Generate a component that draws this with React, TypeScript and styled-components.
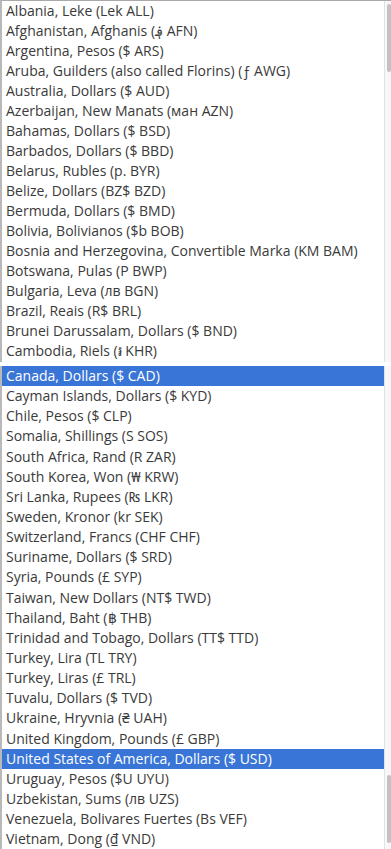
import React from 'react'
import styled, { createGlobalStyle } from 'styled-components'

type Currency = { label: string; selected?: boolean }

const GlobalStyle = createGlobalStyle`
  html, body {
    margin: 0;
    padding: 0;
    background: #ffffff;
  }
`

const Page = styled.div`
  width: 391px;
  height: 849px;
  overflow: hidden;
  display: flex;
  flex-direction: column;
  gap: 4px;
  background: #ffffff;
  font-family: 'Open Sans', 'Noto Sans', sans-serif;
`

const Panel = styled.div<{ $top?: boolean; $height: number }>`
  display: flex;
  height: ${(p) => p.$height}px;
  border-top: ${(p) => (p.$top ? '1px solid #a9a9a9' : 'none')};
  border-left: 2px solid #b9b9b9;
  flex-shrink: 0;
`

const Options = styled.ul`
  flex: 1;
  margin: 0;
  padding: 0;
  list-style: none;
  overflow: hidden;
`

const Option = styled.li<{ $selected?: boolean; $row: number }>`
  height: ${(p) => p.$row}px;
  line-height: ${(p) => p.$row}px;
  padding-left: 4px;
  font-size: 14px;
  white-space: nowrap;
  color: ${(p) => (p.$selected ? '#ffffff' : '#3a3a3a')};
  background: ${(p) => (p.$selected ? '#3875d7' : 'transparent')};
`

const Track = styled.div`
  width: 4px;
  border-left: 1px solid #e2e2e2;
  background: #f7f7f7;
  display: flex;
  flex-direction: column;
  padding: 0 0 0 2px;
`

const Thumb = styled.div<{ $offset: number; $length: number }>`
  margin-top: ${(p) => p.$offset}px;
  height: ${(p) => p.$length}px;
  width: 4px;
  border-radius: 2px;
  background: #c2c2c2;
`

const first: Currency[] = [
  { label: 'Albania, Leke (Lek ALL)' },
  { label: 'Afghanistan, Afghanis (؋ AFN)' },
  { label: 'Argentina, Pesos ($ ARS)' },
  { label: 'Aruba, Guilders (also called Florins) (ƒ AWG)' },
  { label: 'Australia, Dollars ($ AUD)' },
  { label: 'Azerbaijan, New Manats (ман AZN)' },
  { label: 'Bahamas, Dollars ($ BSD)' },
  { label: 'Barbados, Dollars ($ BBD)' },
  { label: 'Belarus, Rubles (p. BYR)' },
  { label: 'Belize, Dollars (BZ$ BZD)' },
  { label: 'Bermuda, Dollars ($ BMD)' },
  { label: 'Bolivia, Bolivianos ($b BOB)' },
  { label: 'Bosnia and Herzegovina, Convertible Marka (KM BAM)' },
  { label: 'Botswana, Pulas (P BWP)' },
  { label: 'Bulgaria, Leva (лв BGN)' },
  { label: 'Brazil, Reais (R$ BRL)' },
  { label: 'Brunei Darussalam, Dollars ($ BND)' },
  { label: 'Cambodia, Riels (៛ KHR)' },
]

const second: Currency[] = [
  { label: 'Canada, Dollars ($ CAD)', selected: true },
  { label: 'Cayman Islands, Dollars ($ KYD)' },
  { label: 'Chile, Pesos ($ CLP)' },
  { label: 'Somalia, Shillings (S SOS)' },
  { label: 'South Africa, Rand (R ZAR)' },
  { label: 'South Korea, Won (₩ KRW)' },
  { label: 'Sri Lanka, Rupees (₨ LKR)' },
  { label: 'Sweden, Kronor (kr SEK)' },
  { label: 'Switzerland, Francs (CHF CHF)' },
  { label: 'Suriname, Dollars ($ SRD)' },
  { label: 'Syria, Pounds (£ SYP)' },
  { label: 'Taiwan, New Dollars (NT$ TWD)' },
  { label: 'Thailand, Baht (฿ THB)' },
  { label: 'Trinidad and Tobago, Dollars (TT$ TTD)' },
  { label: 'Turkey, Lira (TL TRY)' },
  { label: 'Turkey, Liras (£ TRL)' },
  { label: 'Tuvalu, Dollars ($ TVD)' },
  { label: 'Ukraine, Hryvnia (₴ UAH)' },
  { label: 'United Kingdom, Pounds (£ GBP)' },
  { label: 'United States of America, Dollars ($ USD)', selected: true },
  { label: 'Uruguay, Pesos ($U UYU)' },
  { label: 'Uzbekistan, Sums (лв UZS)' },
  { label: 'Venezuela, Bolivares Fuertes (Bs VEF)' },
  { label: 'Vietnam, Dong (₫ VND)' },
]

const App = (): JSX.Element => {
  return (
    <Page>
      <GlobalStyle />
      <Panel $top $height={361}>
        <Options>
          {first.map((c) => (
            <Option key={c.label} $row={20} $selected={c.selected}>
              {c.label}
            </Option>
          ))}
        </Options>
        <Track>
          <Thumb $offset={3} $length={68} />
        </Track>
      </Panel>
      <Panel $height={483}>
        <Options>
          {second.map((c) => (
            <Option key={c.label} $row={20.15} $selected={c.selected}>
              {c.label}
            </Option>
          ))}
        </Options>
        <Track>
          <Thumb $offset={409} $length={68} />
        </Track>
      </Panel>
    </Page>
  )
}

export default App
